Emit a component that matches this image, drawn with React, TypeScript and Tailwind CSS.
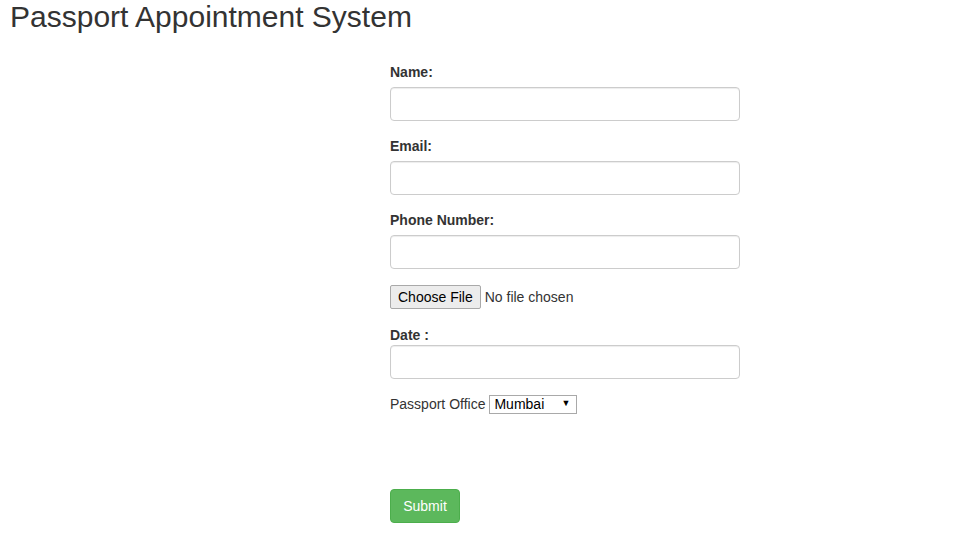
import React from "react";

function Field({ label, gap = true }: { label: string; gap?: boolean }) {
  return (
    <div className="mb-[15px]">
      <label className={`block text-[14px] leading-[20px] font-bold text-[#333] ${gap ? "mb-[5px]" : "mb-0"}`}>{label}</label>
      <div className="h-[34px] w-full rounded-[4px] border border-[#ccc] bg-white shadow-[inset_0_1px_1px_rgba(0,0,0,0.075)]" />
    </div>
  );
}

export default function App() {
  return (
    <div className="min-h-[541px] bg-white text-[#333] font-['Liberation_Sans',Arial,sans-serif]">
      <h1 className="m-0 pl-[10px] text-[30px] leading-[33px] font-normal text-[#333]">Passport Appointment System</h1>
      <div className="ml-[390px] w-[350px] mt-[29px]">
        <Field label="Name:" />
        <Field label="Email:" />
        <Field label="Phone Number:" />
        <div className="mb-[15px] h-[26px] flex items-center text-[14px]">
          <span className="h-[24px] px-[7px] flex items-center border border-[#a9a9a9] rounded-[2px] bg-[#ececec] text-[14px] text-black leading-none">Choose File</span>
          <span className="ml-[4px] text-[#333]">No file chosen</span>
        </div>
        <Field label="Date :" gap={false} />
        <div className="flex items-center h-[20px] text-[14px] text-[#333]">
          <span>Passport Office</span>
          <span className="ml-[4px] h-[19px] w-[88px] flex items-center justify-between border border-[#a9a9a9] bg-white pl-[4px] pr-[6px] text-black">
            <span>Mumbai</span>
            <span className="text-[9px]">▼</span>
          </span>
        </div>
        <div className="mt-[75px]">
          <button className="h-[34px] w-[70px] rounded-[4px] border border-[#4cae4c] bg-[#5cb85c] text-white text-[14px]">Submit</button>
        </div>
      </div>
    </div>
  );
}
